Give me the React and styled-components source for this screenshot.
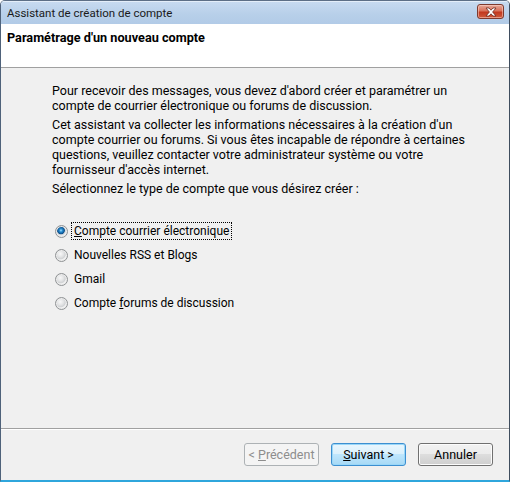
import styled, { createGlobalStyle } from "styled-components";

const GlobalStyle = createGlobalStyle`
  html, body {
    margin: 0;
    padding: 0;
    background: #ffffff;
  }
  body {
    font-family: Roboto, "Open Sans", sans-serif;
    font-size: 12.5px;
  }
`;

const options = [
  { id: "mail", label: "Compte courrier électronique", key: 0, checked: true },
  { id: "rss", label: "Nouvelles RSS et Blogs" },
  { id: "gmail", label: "Gmail" },
  { id: "news", label: "Compte forums de discussion", key: 7 },
];

function Mnemonic({ text, at }) {
  if (at === undefined) return text;
  return (
    <>
      {text.slice(0, at)}
      <u>{text[at]}</u>
      {text.slice(at + 1)}
    </>
  );
}

function App() {
  return (
    <>
      <GlobalStyle />
      <Window>
        <TitleBar>
          <span>Assistant de création de compte</span>
          <CloseButton>
            <svg width="14" height="10" viewBox="0 0 14 10">
              <path
                d="M2 1 L5 1 L7 3.2 L9 1 L12 1 L8.6 5 L12 9 L9 9 L7 6.8 L5 9 L2 9 L5.4 5 Z"
                fill="#ffffff"
                stroke="#6b2a20"
                strokeWidth="0.8"
                strokeLinejoin="round"
              />
            </svg>
          </CloseButton>
        </TitleBar>

        <Header>Paramétrage d'un nouveau compte</Header>

        <Body>
          <Paragraph>
            Pour recevoir des messages, vous devez d'abord créer et paramétrer un
            <br />
            compte de courrier électronique ou forums de discussion.
          </Paragraph>
          <Paragraph>
            Cet assistant va collecter les informations nécessaires à la création d'un
            <br />
            compte courrier ou forums. Si vous êtes incapable de répondre à certaines
            <br />
            questions, veuillez contacter votre administrateur système ou votre
            <br />
            fournisseur d'accès internet.
          </Paragraph>
          <Paragraph>Sélectionnez le type de compte que vous désirez créer :</Paragraph>

          <RadioList>
            {options.map((opt) => (
              <RadioRow key={opt.id}>
                <RadioCircle $checked={opt.checked} />
                <RadioLabel $focused={opt.checked}>
                  <Mnemonic text={opt.label} at={opt.key} />
                </RadioLabel>
              </RadioRow>
            ))}
          </RadioList>
        </Body>

        <Footer>
          <Button disabled>
            &lt; <u>P</u>récédent
          </Button>
          <Button $primary>
            <u>S</u>uivant &gt;
          </Button>
          <Button>Annuler</Button>
        </Footer>
      </Window>
    </>
  );
}

const Window = styled.div`
  box-sizing: border-box;
  width: 510px;
  height: 482px;
  display: flex;
  flex-direction: column;
  border-top: 1px solid #5d6f86;
  border-left: 1px solid #4f627a;
  border-right: 1px solid #3f4d5e;
  border-bottom: 2px solid #2fa6dc;
  border-radius: 5px 5px 0 0;
  overflow: hidden;
  color: #000000;
`;

const TitleBar = styled.div`
  height: 23px;
  flex: none;
  display: flex;
  align-items: center;
  justify-content: space-between;
  padding: 0 5px 0 6px;
  background: linear-gradient(#c8dbf0, #b7cfe9 60%, #b2cbe7);
  box-shadow: inset 0 1px 0 #e4eef9;
  font-size: 11.5px;
  color: #1a1a1a;
`;

const CloseButton = styled.div`
  box-sizing: border-box;
  width: 27px;
  height: 15px;
  margin-top: -2px;
  display: flex;
  align-items: center;
  justify-content: center;
  border: 1px solid #7e3a2e;
  border-radius: 3px;
  background: linear-gradient(#e6a899, #d9725b 45%, #c2381f 55%, #cf5a3c);
  box-shadow: inset 0 0 0 1px rgba(255, 220, 210, 0.5);
`;

const Header = styled.div`
  height: 44px;
  flex: none;
  box-sizing: border-box;
  padding: 6px 0 0 6px;
  background: #ffffff;
  border-bottom: 1px solid #a0a0a0;
  font-weight: 700;
  font-size: 12.7px;
`;

const Body = styled.div`
  flex: 1;
  padding: 15px 0 0 51px;
  background: #f0f0f0;
  border-bottom: 1px solid #a0a0a0;
`;

const Paragraph = styled.p`
  margin: 0 0 4px;
  line-height: 15px;
  white-space: nowrap;
`;

const RadioList = styled.div`
  margin-top: 23px;
  display: flex;
  flex-direction: column;
`;

const RadioRow = styled.div`
  height: 24px;
  display: flex;
  align-items: center;
  padding-left: 3px;
`;

const RadioCircle = styled.span`
  box-sizing: border-box;
  width: 13px;
  height: 13px;
  border-radius: 50%;
  border: 1px solid #8f9294;
  margin-right: 3px;
  flex: none;
  background: ${(p) =>
    p.$checked
      ? "radial-gradient(circle at 45% 40%, #a6e4ff 0, #2a8fd4 1.5px, #0b4f8a 3.5px, #c9cdd2 4.2px, #eef0f2 5.5px)"
      : "radial-gradient(circle at 40% 35%, #f8f8f8 0, #e4e5e6 3px, #d0d2d4 5px, #f2f2f2 6px)"};
  box-shadow: inset 0 0 0 1px #ececec;
`;

const RadioLabel = styled.span`
  box-sizing: border-box;
  display: inline-block;
  height: 18px;
  line-height: 16px;
  padding: 0 2px;
  font-size: 12px;
  border: 1px dotted ${(p) => (p.$focused ? "#000000" : "transparent")};
  white-space: nowrap;
`;

const Footer = styled.div`
  flex: none;
  height: 51px;
  box-sizing: border-box;
  display: flex;
  justify-content: flex-end;
  align-items: flex-start;
  gap: 12px;
  padding: 13px 16px 0 0;
  background: #f0f0f0;
  border-top: 1px solid #ffffff;
`;

const Button = styled.button`
  box-sizing: border-box;
  width: 75px;
  height: 23px;
  padding: 0;
  font-family: inherit;
  font-size: 12.5px;
  border-radius: 3px;
  border: 1px solid ${(p) => (p.disabled ? "#adb2b5" : p.$primary ? "#3c8fd0" : "#707070")};
  color: ${(p) => (p.disabled ? "#8d8d8d" : "#000000")};
  background: ${(p) =>
    p.disabled
      ? "#f4f4f4"
      : p.$primary
      ? "linear-gradient(#eaf6fd, #d9f0fc 50%, #bee6fd 50%, #a7d9f5)"
      : "linear-gradient(#f2f2f2, #ebebeb 50%, #dddddd 50%, #cfcfcf)"};
  box-shadow: ${(p) =>
    p.disabled ? "none" : p.$primary ? "inset 0 0 0 1px #9ad7f8" : "inset 0 0 0 1px #fcfcfc"};
`;

export default App;
